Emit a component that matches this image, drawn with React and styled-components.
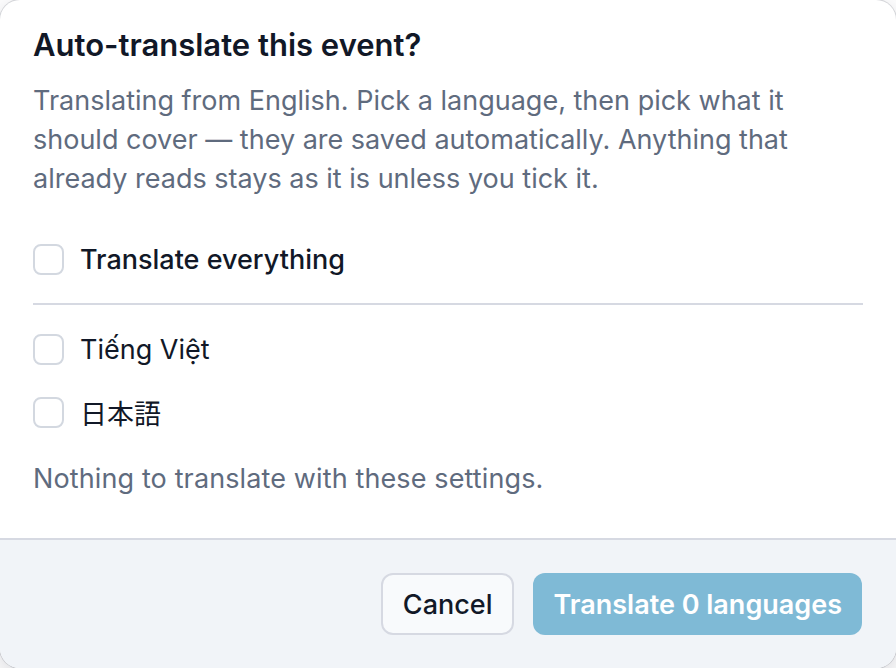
import React, { useState } from "react";
import styled, { createGlobalStyle } from "styled-components";

const GlobalStyle = createGlobalStyle`
  html, body {
    margin: 0;
    padding: 0;
    background: #ffffff;
    overflow: hidden;
  }
  body {
    font-family: Inter, "Noto Sans", "Noto Sans CJK JP", sans-serif;
    -webkit-font-smoothing: antialiased;
  }
  * {
    box-sizing: border-box;
  }
`;

const languages = [
  { code: "vi", label: "Tiếng Việt" },
  { code: "ja", label: "日本語" },
];

const App = () => {
  const [all, setAll] = useState(false);
  const [picked, setPicked] = useState({});

  const count = Object.values(picked).filter(Boolean).length;

  const toggle = (code) => setPicked((p) => ({ ...p, [code]: !p[code] }));

  return (
    <>
      <GlobalStyle />
      <Dialog role="dialog" aria-labelledby="dlg-title">
        <Body>
          <Title id="dlg-title">Auto-translate this event?</Title>
          <Desc>
            Translating from English. Pick a language, then pick what it
            should cover — they are saved automatically. Anything that
            already reads stays as it is unless you tick it.
          </Desc>

          <Option $strong>
            <Box type="checkbox" checked={all} onChange={() => setAll(!all)} />
            Translate everything
          </Option>

          <Divider />

          <LangList>
            {languages.map((lang) => (
              <Option key={lang.code} lang={lang.code}>
                <Box
                  type="checkbox"
                  checked={!!picked[lang.code]}
                  onChange={() => toggle(lang.code)}
                />
                {lang.label}
              </Option>
            ))}
          </LangList>

          <Note>Nothing to translate with these settings.</Note>
        </Body>

        <Footer>
          <Button>Cancel</Button>
          <Button $primary disabled={count === 0}>
            {`Translate ${count} languages`}
          </Button>
        </Footer>
      </Dialog>
    </>
  );
};

const Dialog = styled.section`
  display: flex;
  flex-direction: column;
  height: 100vh;
  background: #ffffff;
  border-radius: 20px;
  overflow: hidden;
  box-shadow: 0 0 0 1px rgba(15, 23, 42, 0.14), 0 8px 28px rgba(15, 23, 42, 0.18);
`;

const Body = styled.div`
  flex: 1;
  padding: 26px 33px 0;
`;

const Title = styled.h2`
  margin: 0;
  font-size: 31px;
  line-height: 38px;
  font-weight: 600;
  color: #111827;
`;

const Desc = styled.p`
  margin: 17px 0 0;
  font-size: 27px;
  line-height: 39px;
  color: #5f6b7e;
`;

const Option = styled.label`
  display: flex;
  align-items: center;
  gap: 16px;
  height: 31px;
  margin-top: ${(p) => (p.$strong ? "46px" : "0")};
  font-size: 27px;
  font-weight: ${(p) => (p.$strong ? 500 : 400)};
  color: #111827;
  cursor: pointer;
`;

const Box = styled.input`
  appearance: none;
  flex-shrink: 0;
  width: 31px;
  height: 31px;
  margin: 0;
  border: 2px solid #d3d8e0;
  border-radius: 8px;
  background: #ffffff;
  cursor: pointer;

  &:checked {
    background: #7fbad6;
    border-color: #7fbad6;
  }
`;

const Divider = styled.hr`
  margin: 28px 0 29px;
  border: 0;
  border-top: 2px solid #d6d9e2;
`;

const LangList = styled.div`
  display: flex;
  flex-direction: column;
  gap: 32px;
`;

const Note = styled.p`
  margin: 31px 0 0;
  font-size: 27px;
  line-height: 39px;
  letter-spacing: 0.12px;
  color: #5f6b7e;
`;

const Footer = styled.footer`
  display: flex;
  justify-content: flex-end;
  align-items: center;
  gap: 19px;
  height: 130px;
  padding: 0 34px;
  background: #f1f4f8;
  border-top: 2px solid #d6d9e2;
`;

const Button = styled.button`
  height: 62px;
  padding: 0 20px;
  border-radius: 12px;
  font-family: inherit;
  font-size: 27px;
  font-weight: ${(p) => (p.$primary ? 600 : 500)};
  border: ${(p) => (p.$primary ? "none" : "2px solid #d6d9e2")};
  background: ${(p) => (p.$primary ? "#7fbad6" : "#f8fafc")};
  color: ${(p) => (p.$primary ? "#ffffff" : "#111827")};
  cursor: pointer;

  &:disabled {
    cursor: default;
  }
`;

export default App;
